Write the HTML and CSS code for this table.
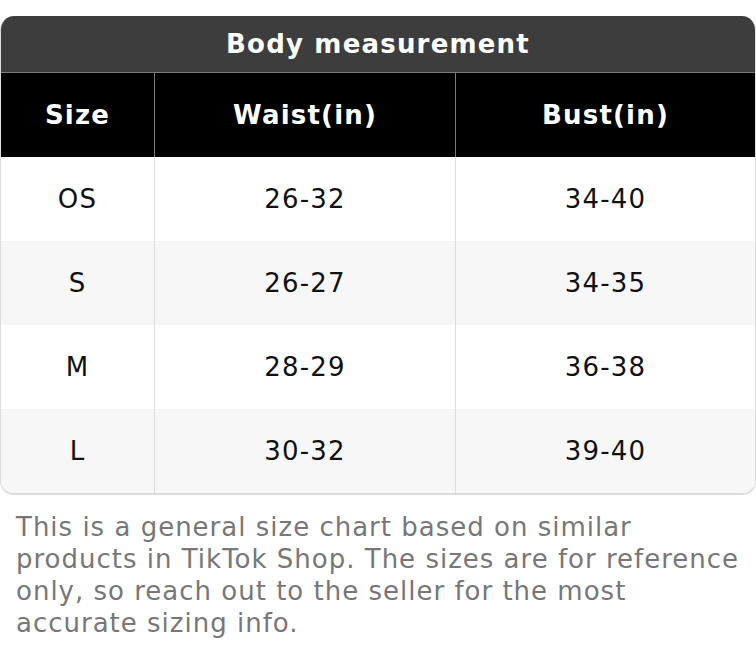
FILE: index.html
```html
<!DOCTYPE html>
<html>
<head>
<meta charset="utf-8">
<link rel="stylesheet" href="styles.css">
</head>
<body>
<div class="chart">
  <div class="title">Body measurement</div>
  <table class="grid">
    <thead>
      <tr><th class="c1">Size</th><th class="c2">Waist(in)</th><th class="c3">Bust(in)</th></tr>
    </thead>
    <tbody>
      <tr><td>OS</td><td>26-32</td><td>34-40</td></tr>
      <tr class="alt"><td>S</td><td>26-27</td><td>34-35</td></tr>
      <tr><td>M</td><td>28-29</td><td>36-38</td></tr>
      <tr class="alt"><td>L</td><td>30-32</td><td>39-40</td></tr>
    </tbody>
  </table>
</div>
<p class="note">This is a general size chart based on similar products in TikTok Shop. The sizes are for reference only, so reach out to the seller for the most accurate sizing info.</p>
</body>
</html>
```

FILE: styles.css
```css
html, body {
  margin: 0;
  padding: 0;
  background: #fff;
}
body {
  padding-top: 16px;
  font-family: "DejaVu Sans", sans-serif;
  letter-spacing: 1.2px;
}
.chart {
  width: 756px;
  box-sizing: border-box;
  border: 1px solid #dcdcdc;
  border-top: none;
  border-bottom-width: 2px;
  border-radius: 14px;
  overflow: hidden;
}
.title {
  height: 56px;
  background: #3d3d3d;
  color: #fff;
  font-weight: bold;
  font-size: 26px;
  display: flex;
  align-items: center;
  justify-content: center;
  border-bottom: 1px solid #7a7a7a;
}
.grid {
  width: 100%;
  border-collapse: collapse;
  table-layout: fixed;
}
.c1 { width: 153px; }
.c2 { width: 300px; }
th {
  background: #000;
  color: #fff;
  font-weight: bold;
  font-size: 26px;
  height: 84px;
  padding: 0;
  border-left: 1px solid #7a7a7a;
}
th:first-child, td:first-child { border-left: none; }
td {
  height: 84px;
  padding: 0;
  text-align: center;
  font-size: 26px;
  color: #111;
  border-left: 1px solid #dcdcdc;
  background: #fff;
}
tr.alt td { background: #f7f7f7; }
.note {
  margin: 16px 6px 0 16px;
  font-size: 26px;
  line-height: 32px;
  letter-spacing: 1px;
  color: #777;
}
```
